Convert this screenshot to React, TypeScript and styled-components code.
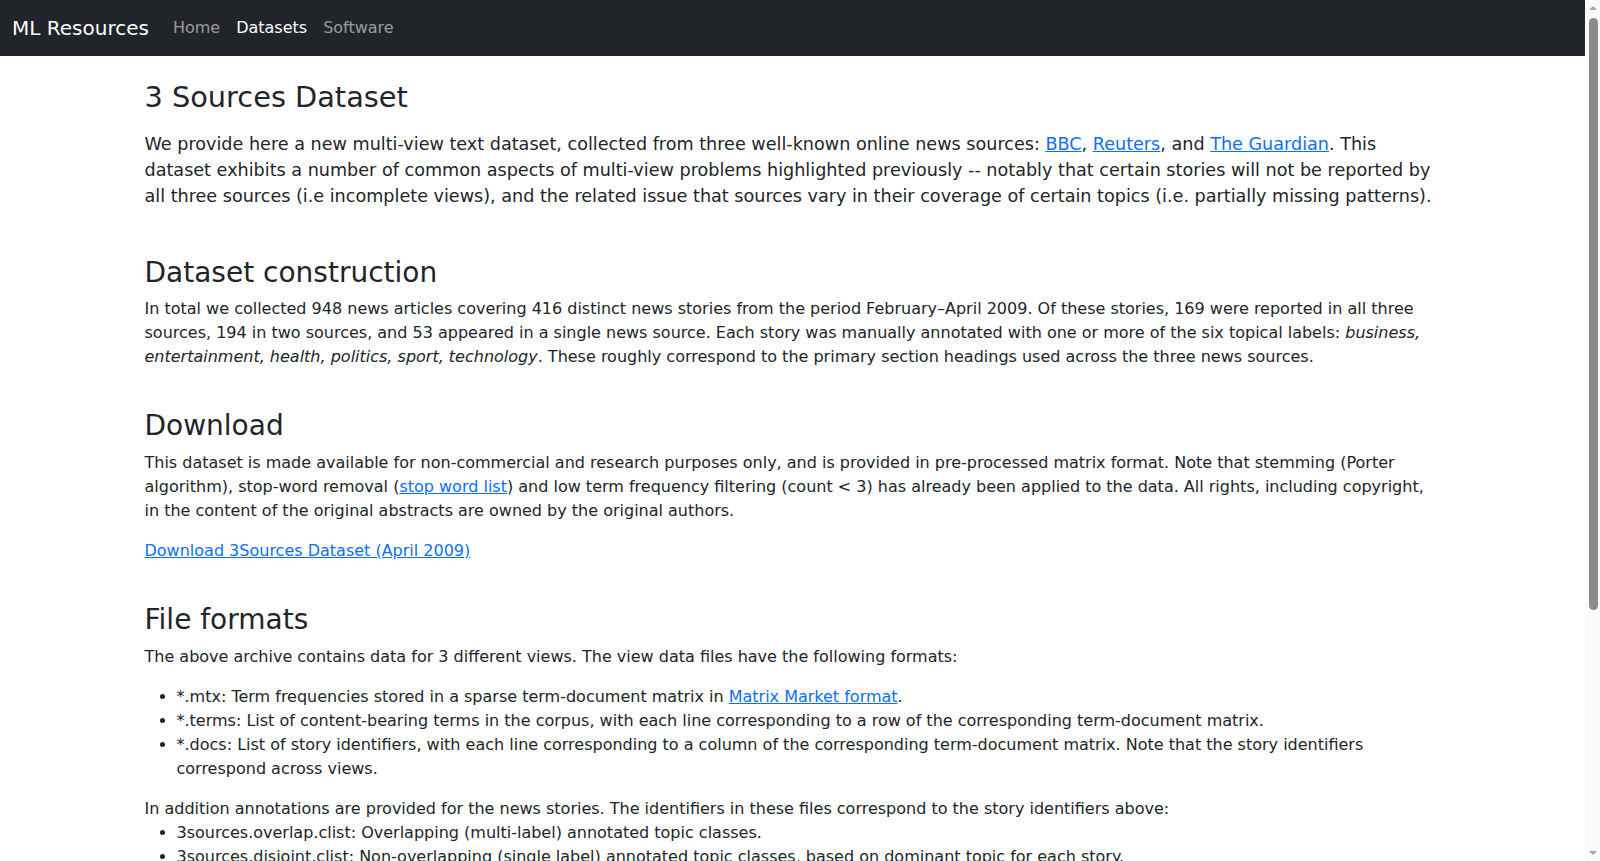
import React from "react";
import styled, { createGlobalStyle } from "styled-components";

const GlobalStyle = createGlobalStyle`
  *, *::before, *::after { box-sizing: border-box; }
  html, body { margin: 0; padding: 0; height: 100%; overflow: hidden; }
  body {
    font-family: "DejaVu Sans", "Noto Sans", sans-serif;
    font-size: 16px;
    line-height: 1.5;
    color: #212529;
    background: #fff;
  }
`;

/* Window shell: scrolling page on the left, classic scrollbar rail on the right */
const Shell = styled.div`
  display: flex;
  height: 100vh;
`;

const PageArea = styled.div`
  flex: 1 1 auto;
  min-width: 0;
  overflow-y: auto;
  scrollbar-width: none;
  &::-webkit-scrollbar { display: none; }
`;

const ScrollRail = styled.div`
  flex: 0 0 15px;
  display: flex;
  flex-direction: column;
  background: #fafafa;
`;

const ArrowButton = styled.div<{ $dir: "up" | "down" }>`
  flex: 0 0 16px;
  display: flex;
  align-items: center;
  justify-content: flex-start;
  padding-left: 4px;

  &::before {
    content: "";
    width: 0;
    height: 0;
    border-left: 4px solid transparent;
    border-right: 4px solid transparent;
    ${(p) =>
      p.$dir === "up"
        ? "border-bottom: 4px solid #a3a3a3;"
        : "border-top: 4px solid #a3a3a3;"}
  }
`;

const Track = styled.div`
  flex: 1 1 auto;
  padding: 2px 2px 0 4px;
`;

const Thumb = styled.div`
  width: 9px;
  height: 592px;
  border-radius: 5px;
  background: #8b8b8b;
`;

const NavBar = styled.nav`
  display: flex;
  align-items: center;
  height: 56px;
  padding: 8px 12px;
  background: #212529;
`;

const Brand = styled.a`
  margin-right: 16px;
  padding: 5px 0;
  font-size: 20px;
  line-height: 30px;
  color: #fff;
  text-decoration: none;
  white-space: nowrap;
`;

const NavList = styled.ul`
  display: flex;
  list-style: none;
  margin: 0;
  padding: 0;
`;

const NavLink = styled.a<{ $active?: boolean }>`
  display: block;
  padding: 8px;
  font-size: 16px;
  line-height: 24px;
  text-decoration: none;
  color: ${(p) => (p.$active ? "#fff" : "rgba(255, 255, 255, 0.55)")};
`;

const Container = styled.main`
  max-width: 1320px;
  margin: 0 auto;
  padding: 24px 12px 56px;
`;

const Title = styled.h1`
  margin: 0 0 16px;
  font-size: 28.8px;
  font-weight: 500;
  line-height: 1.2;
`;

const Lead = styled.p`
  margin: 0 0 46px;
  font-size: 17.6px;
  line-height: 1.5;
`;

const SectionTitle = styled.h2`
  margin: 40px 0 8px;
  font-size: 28px;
  font-weight: 500;
  line-height: 1.2;
`;

const Para = styled.p<{ $tight?: boolean }>`
  margin: 0 0 ${(p) => (p.$tight ? "0" : "16px")};
`;

const Link = styled.a`
  color: #0d6efd;
  text-decoration: underline;
`;

const List = styled.ul`
  margin: 0 0 16px;
  padding-left: 32px;
`;

const Footer = styled.footer`
  margin-top: 40px;
  padding-top: 16px;
  border-top: 1px solid #dee2e6;
  font-size: 14px;
  color: #6c757d;
`;

export default function App() {
  return (
    <Shell>
      <GlobalStyle />
      <PageArea>
        <NavBar>
          <Brand href="#">ML Resources</Brand>
          <NavList>
            <li><NavLink href="#">Home</NavLink></li>
            <li><NavLink href="#" $active>Datasets</NavLink></li>
            <li><NavLink href="#">Software</NavLink></li>
          </NavList>
        </NavBar>
        <Container>
          <Title>3 Sources Dataset</Title>
          <Lead>
            We provide here a new multi-view text dataset, collected from three well-known online news sources:{" "}
            <Link href="#">BBC</Link>, <Link href="#">Reuters</Link>, and <Link href="#">The Guardian</Link>. This
            dataset exhibits a number of common aspects of multi-view problems highlighted previously -- notably that
            certain stories will not be reported by all three sources (i.e incomplete views), and the related issue
            that sources vary in their coverage of certain topics (i.e. partially missing patterns).
          </Lead>

          <SectionTitle>Dataset construction</SectionTitle>
          <Para>
            In total we collected 948 news articles covering 416 distinct news stories from the period February–April
            2009. Of these stories, 169 were reported in all three sources, 194 in two sources, and 53 appeared in a
            single news source. Each story was manually annotated with one or more of the six topical labels:{" "}
            <em>business, entertainment, health, politics, sport, technology</em>. These roughly correspond to the
            primary section headings used across the three news sources.
          </Para>

          <SectionTitle>Download</SectionTitle>
          <Para>
            This dataset is made available for non-commercial and research purposes only, and is provided in
            pre-processed matrix format. Note that stemming (Porter algorithm), stop-word removal (
            <Link href="#">stop word list</Link>) and low term frequency filtering (count &lt; 3) has already been
            applied to the data. All rights, including copyright, in the content of the original abstracts are owned
            by the original authors.
          </Para>
          <Para>
            <Link href="#">Download 3Sources Dataset (April 2009)</Link>
          </Para>

          <SectionTitle>File formats</SectionTitle>
          <Para>
            The above archive contains data for 3 different views. The view data files have the following formats:
          </Para>
          <List>
            <li>
              *.mtx: Term frequencies stored in a sparse term-document matrix in{" "}
              <Link href="#">Matrix Market format</Link>.
            </li>
            <li>
              *.terms: List of content-bearing terms in the corpus, with each line corresponding to a row of the
              corresponding term-document matrix.
            </li>
            <li>
              *.docs: List of story identifiers, with each line corresponding to a column of the corresponding
              term-document matrix. Note that the story identifiers correspond across views.
            </li>
          </List>
          <Para $tight>
            In addition annotations are provided for the news stories. The identifiers in these files correspond to
            the story identifiers above:
          </Para>
          <List>
            <li>3sources.overlap.clist: Overlapping (multi-label) annotated topic classes.</li>
            <li>
              3sources.disjoint.clist: Non-overlapping (single label) annotated topic classes, based on dominant
              topic for each story.
            </li>
          </List>

          <SectionTitle>Citation</SectionTitle>
          <Para>
            If you use this dataset in your work, please cite: D. Greene, P. Cunningham. "A Matrix Factorization
            Approach for Integrating Multiple Data Views". In Proc. European Conference on Machine Learning and
            Principles and Practice of Knowledge Discovery in Databases (ECML PKDD'09), 2009.
          </Para>

          <Footer>ML Resources</Footer>
        </Container>
      </PageArea>
      <ScrollRail>
        <ArrowButton $dir="up" />
        <Track>
          <Thumb />
        </Track>
        <ArrowButton $dir="down" />
      </ScrollRail>
    </Shell>
  );
}
